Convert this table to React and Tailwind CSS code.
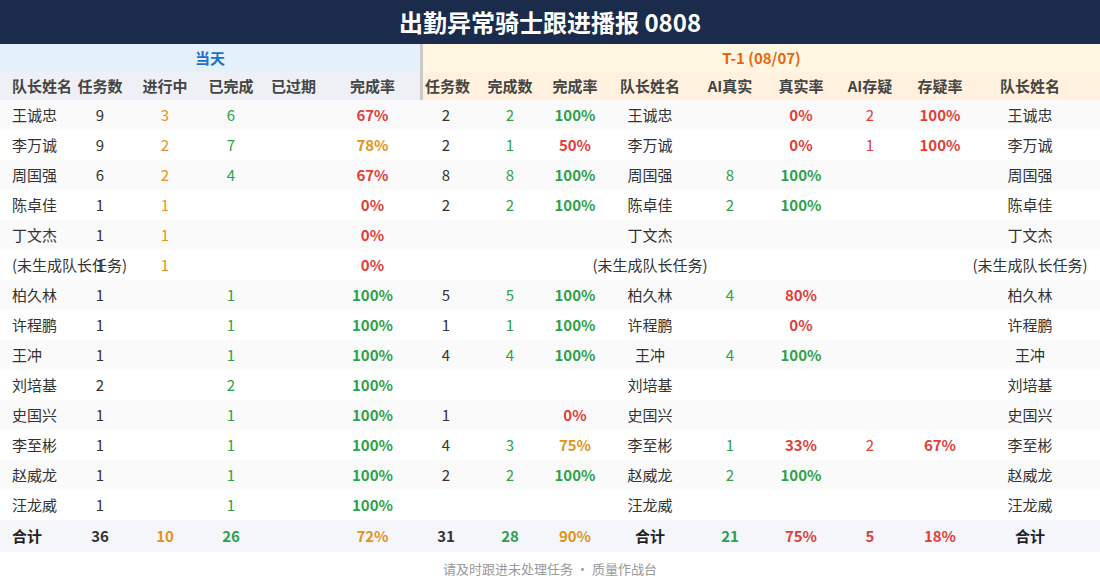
import React from "react";

const R = "text-[#e0403a] font-bold";
const G = "text-[#2ea14a]";
const GB = "text-[#2ea14a] font-bold";
const O = "text-[#e3941c]";
const OB = "text-[#e3941c] font-bold";
const RN = "text-[#e0403a]";

const NOGEN = "(未生成队长任务)";

// [text, colorClass]
const rows = [
  ["王诚忠", ["9"], ["3", O], ["6", G], [""], ["67%", R], ["2"], ["2", G], ["100%", GB], ["", ""], ["67%"]],
];

const data = [
  { n: "王诚忠", c: [["9"], ["3", O], ["6", G], [""], ["67%", R], ["2"], ["2", G], ["100%", GB], null, [""], ["0%", R], ["2", RN], ["100%", R]] },
  { n: "李万诚", c: [["9"], ["2", O], ["7", G], [""], ["78%", OB], ["2"], ["1", G], ["50%", R], null, [""], ["0%", R], ["1", RN], ["100%", R]] },
  { n: "周国强", c: [["6"], ["2", O], ["4", G], [""], ["67%", R], ["8"], ["8", G], ["100%", GB], null, ["8", G], ["100%", GB], [""], [""]] },
  { n: "陈卓佳", c: [["1"], ["1", O], [""], [""], ["0%", R], ["2"], ["2", G], ["100%", GB], null, ["2", G], ["100%", GB], [""], [""]] },
  { n: "丁文杰", c: [["1"], ["1", O], [""], [""], ["0%", R], [""], [""], [""], null, [""], [""], [""], [""]] },
  { n: NOGEN, c: [["1"], ["1", O], [""], [""], ["0%", R], [""], [""], [""], null, [""], [""], [""], [""]] },
  { n: "柏久林", c: [["1"], [""], ["1", G], [""], ["100%", GB], ["5"], ["5", G], ["100%", GB], null, ["4", G], ["80%", R], [""], [""]] },
  { n: "许程鹏", c: [["1"], [""], ["1", G], [""], ["100%", GB], ["1"], ["1", G], ["100%", GB], null, [""], ["0%", R], [""], [""]] },
  { n: "王冲", c: [["1"], [""], ["1", G], [""], ["100%", GB], ["4"], ["4", G], ["100%", GB], null, ["4", G], ["100%", GB], [""], [""]] },
  { n: "刘培基", c: [["2"], [""], ["2", G], [""], ["100%", GB], [""], [""], [""], null, [""], [""], [""], [""]] },
  { n: "史国兴", c: [["1"], [""], ["1", G], [""], ["100%", GB], ["1"], [""], ["0%", R], null, [""], [""], [""], [""]] },
  { n: "李至彬", c: [["1"], [""], ["1", G], [""], ["100%", GB], ["4"], ["3", G], ["75%", OB], null, ["1", G], ["33%", R], ["2", RN], ["67%", R]] },
  { n: "赵威龙", c: [["1"], [""], ["1", G], [""], ["100%", GB], ["2"], ["2", G], ["100%", GB], null, ["2", G], ["100%", GB], [""], [""]] },
  { n: "汪龙威", c: [["1"], [""], ["1", G], [""], ["100%", GB], [""], [""], [""], null, [""], [""], [""], [""]] },
];

const cols =
  "grid grid-cols-[70px_60px_70px_62px_63px_95px_52px_76px_54px_96px_64px_78px_60px_80px_100px_20px]";

const Cell = ({ children, className = "" }) => (
  <div className={`flex items-center justify-center whitespace-nowrap ${className}`}>{children}</div>
);

const Row = ({ name, cells, bg, bold }) => {
  const nameCls = bold ? "font-bold text-[#222]" : "text-[#333]";
  return (
    <div className={`${cols} ${bg} ${bold ? "h-8" : "h-[30px]"} text-[15px]`}>
      <div className={`flex items-center pl-3 whitespace-nowrap ${nameCls}`}>{name}</div>
      {cells.map((c, i) =>
        c === null ? (
          <Cell key={i} className={nameCls}>{name}</Cell>
        ) : (
          <Cell key={i} className={`${c[1] || "text-[#333]"} ${bold ? "font-bold" : ""}`}>
            {c[0]}
          </Cell>
        )
      )}
      <Cell className={nameCls}>{name}</Cell>
      <div />
    </div>
  );
};

const leftHeads = ["任务数", "进行中", "已完成", "已过期", "完成率"];
const rightHeads = ["任务数", "完成数", "完成率", "队长姓名", "AI真实", "真实率", "AI存疑", "存疑率", "队长姓名"];

export default function App() {
  return (
    <div
      className="w-[1100px] h-[586px] bg-white overflow-hidden"
      style={{ fontFamily: '"Noto Sans CJK SC", "Noto Sans", sans-serif' }}
    >
      <div className="h-11 bg-[#1b2b4b] flex items-center justify-center text-white text-[24px] font-bold">
        出勤异常骑士跟进播报 0808
      </div>

      <div className="flex h-7 text-[15px] font-bold">
        <div className="w-[420px] bg-[#e4f1fd] text-[#1f6fcc] flex items-center justify-center">当天</div>
        <div className="flex-1 bg-[#fff6e1] text-[#e8660e] border-l-[3px] border-[#c9c9c9] flex items-center justify-center">
          T-1 (08/07)
        </div>
      </div>

      <div className="flex h-7 text-[15px] font-bold text-[#444]">
        <div className="w-[420px] bg-[#eef0f5] grid grid-cols-[70px_60px_70px_62px_63px_95px]">
          <div className="flex items-center pl-3 whitespace-nowrap">队长姓名</div>
          {leftHeads.map((h, i) => (
            <Cell key={i}>{h}</Cell>
          ))}
        </div>
        <div className="flex-1 bg-[#fff1dd] border-l-[3px] border-[#c9c9c9] grid grid-cols-[49px_76px_54px_96px_64px_78px_60px_80px_100px_20px]">
          {rightHeads.map((h, i) => (
            <Cell key={i}>{h}</Cell>
          ))}
          <div />
        </div>
      </div>

      {data.map((r, i) => (
        <Row key={i} name={r.n} cells={r.c} bg={i % 2 === 0 ? "bg-[#fafafa]" : "bg-white"} />
      ))}

      <Row
        name="合计"
        bold
        bg="bg-[#f5f6fa]"
        cells={[
          ["36", "text-[#333]"],
          ["10", O],
          ["26", G],
          [""],
          ["72%", O],
          ["31", "text-[#333]"],
          ["28", G],
          ["90%", O],
          null,
          ["21", G],
          ["75%", RN],
          ["5", RN],
          ["18%", RN],
        ]}
      />

      <div className="h-[34px] flex items-center justify-center text-[13px] text-[#999]">
        请及时跟进未处理任务 · 质量作战台
      </div>
    </div>
  );
}
